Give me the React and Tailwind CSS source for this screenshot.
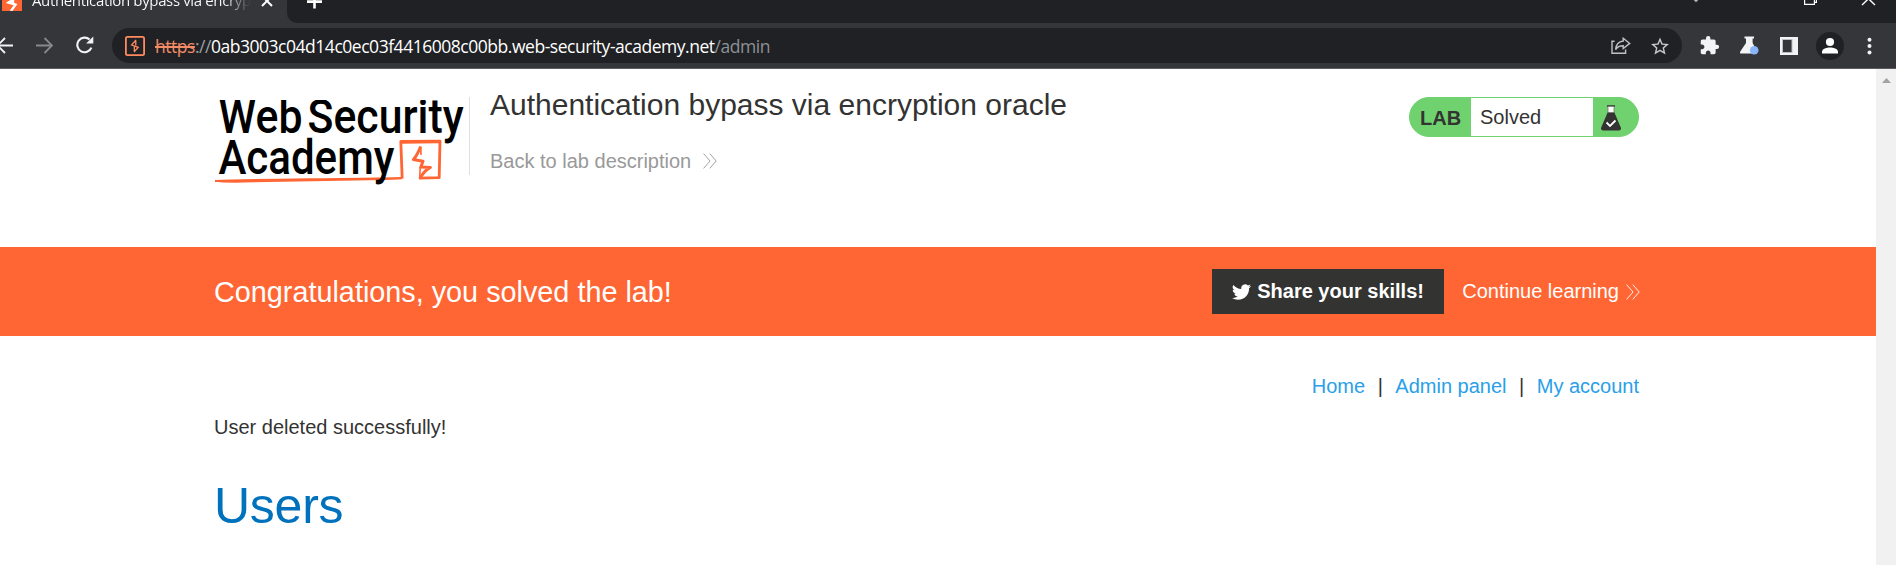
import React from "react";

function TabStrip() {
  return (
    <div className="flex h-[23px] bg-[#35363a] overflow-hidden">
      <div className="flex w-[287px] shrink-0">
        <svg className="ml-[2px] h-[11px] w-5 shrink-0" viewBox="0 0 20 11">
          <rect width="20" height="11" fill="#ff6633" />
          <path d="M10.5 0 L6.5 2.5 L13.5 4.6 L9 11 M11 0 V4" fill="none" stroke="#fff" strokeWidth="2.4" />
        </svg>
        <div className="ml-[10px] -mt-[12px] h-6 w-[219px] overflow-hidden whitespace-nowrap bg-linear-to-r from-white from-88% to-[#35363a] bg-clip-text font-['Open_Sans',sans-serif] text-[15px] leading-6 tracking-[-0.36px] text-transparent">
          Authentication bypass via encryption oracle
        </div>
        <svg className="ml-[10px] h-[7px] w-[12px]" viewBox="0 0 12 7" stroke="#fff" strokeWidth="2" fill="none">
          <path d="M1 -4 L11 6 M11 -4 L1 6" />
        </svg>
      </div>
      <div className="flex flex-1 rounded-bl-[10px] bg-[#202124]">
        <svg className="ml-[20px] h-[9px] w-[15px]" viewBox="0 0 15 9" stroke="#fff" strokeWidth="2.6" fill="none">
          <path d="M7.5 -6 V8.5 M0 1.6 H15" />
        </svg>
        <svg className="ml-auto h-[3px] w-[8px]" viewBox="0 0 8 3" stroke="#b5b6b8" strokeWidth="1.8" fill="none">
          <path d="M0 -3 L4 1 L8 -3" />
        </svg>
        <svg className="ml-[104px] h-[6px] w-[14px]" viewBox="0 0 14 6" stroke="#fff" strokeWidth="1.2" fill="none">
          <path d="M0.6 -4 V4.4 H10.4 V-4 M10.4 2.4 H12.4 V-4" />
        </svg>
        <svg className="ml-[43px] mr-[20px] h-[6px] w-[15px]" viewBox="0 0 15 6" stroke="#fff" strokeWidth="1.4" fill="none">
          <path d="M1 4.9 L13.5 -7 M14 4.9 L1.5 -7" />
        </svg>
      </div>
    </div>
  );
}

function Toolbar() {
  return (
    <div className="flex h-[46px] items-center border-b border-[#5b5c5f] bg-[#35363a]">
      <svg className="h-[20px] w-[14px] shrink-0" viewBox="0 0 14 20" fill="none" stroke="#f1f3f4" strokeWidth="1.9">
        <path d="M13 9.5 H-3 M5 2 L-2.5 9.5 L5 17" />
      </svg>
      <svg className="ml-[22px] h-[20px] w-[17px] shrink-0" viewBox="0 0 17 20" fill="none" stroke="#86878a" strokeWidth="1.9">
        <path d="M0 9.5 H15.5 M8.5 2 L16 9.5 L8.5 17" />
      </svg>
      <svg className="ml-[23px] -mt-px h-[18px] w-[18px] shrink-0" viewBox="0 0 18 18">
        <path d="M15.4 11.6 A7.3 7.3 0 1 1 13.6 3.6" fill="none" stroke="#f1f3f4" strokeWidth="2.1" />
        <path d="M17.3 0.4 V7.6 H10.1 Z" fill="#f1f3f4" />
      </svg>
      <div className="ml-[18px] flex h-[35px] w-[1570px] shrink-0 items-center rounded-full bg-[#202124]">
        <svg className="ml-[13px] h-[20px] w-[20px] shrink-0" viewBox="0 0 20 20" fill="none" stroke="#ff8a5f">
          <rect x="0.9" y="0.9" width="18.2" height="18.2" rx="1.6" strokeWidth="1.8" />
          <path d="M11 4 L6.6 9 L13.2 11.4 L9 16 M10.8 4.5 V9.4 M9.3 10.8 V15.6" strokeWidth="1.3" />
        </svg>
        <div className="ml-[10px] whitespace-nowrap font-['Open_Sans',sans-serif] text-[17.5px] leading-[30px] tracking-[-0.47px] text-white">
          <span className="text-[#f28b66] line-through decoration-[1.5px]">https</span>
          <span className="text-[#9aa0a6]">://</span>
          <span>0ab3003c04d14c0ec03f4416008c00bb.web-security-academy.net</span>
          <span className="text-[#8d9196]">/admin</span>
        </div>
        <svg className="ml-auto h-[18px] w-[20px] shrink-0" viewBox="0 0 20 18" fill="none" stroke="#bdc1c6" strokeWidth="1.4">
          <path d="M3.6 4.3 H1 V16.3 H14.6 V12.6" />
          <path d="M12.2 1.3 L18.7 6.4 L12.2 11.6 V8.8 C8.8 8.8 6.3 9.9 4.6 12.6 C5 8 7.6 4.5 12.2 4 Z" />
        </svg>
        <svg className="ml-[20px] mr-[13px] h-[18px] w-[18px] shrink-0" viewBox="2 2 20 19" fill="#c4c7cb">
          <path d="M22 9.24l-7.19-.62L12 2 9.19 8.63 2 9.24l5.46 4.73L5.82 21 12 17.27 18.18 21l-1.63-7.03L22 9.24zM12 15.4l-3.76 2.27 1-4.28-3.32-2.88 4.38-.38L12 6.1l1.71 4.04 4.38.38-3.32 2.88 1 4.28L12 15.4z" />
        </svg>
      </div>
      <svg className="ml-[17px] h-[21px] w-[21px] shrink-0" viewBox="0 0 24 24" fill="#f1f3f4">
        <path d="M20.5 11H19V7c0-1.1-.9-2-2-2h-4V3.5a2.5 2.5 0 0 0-5 0V5H4c-1.1 0-1.99.9-1.99 2v3.8H3.5c1.49 0 2.7 1.21 2.7 2.7s-1.21 2.7-2.7 2.7H2V20c0 1.1.9 2 2 2h3.8v-1.5c0-1.49 1.21-2.7 2.7-2.7s2.7 1.21 2.7 2.7V22H17c1.1 0 2-.9 2-2v-4h1.5a2.5 2.5 0 0 0 0-5z" />
      </svg>
      <svg className="ml-[20px] h-[19px] w-[20px] shrink-0" viewBox="0 0 20 19">
        <path d="M4.5 0.5 H14 V2.5 H12.6 V7 L17 15 V17.5 H1 Q-0.4 17.5 0.3 15.6 L6 7 V2.5 H4.5 Z" fill="#f1f3f4" />
        <circle cx="14.2" cy="14.2" r="4.3" fill="#8ab4f8" />
      </svg>
      <svg className="ml-[20px] h-[18px] w-[18px] shrink-0" viewBox="0 0 18 18">
        <rect width="18" height="18" fill="#f1f3f4" />
        <rect x="2.5" y="2.5" width="9.5" height="13" fill="#35363a" stroke="#bcbdbf" />
      </svg>
      <svg className="ml-[18px] h-[28px] w-[28px] shrink-0" viewBox="0 0 28 28">
        <circle cx="14" cy="14" r="14" fill="#202124" />
        <circle cx="14" cy="10" r="4.1" fill="#fff" />
        <path d="M6 21.6 V20 C6 16.7 11 15.6 14 15.6 C17 15.6 22 16.7 22 20 V21.6 Z" fill="#fff" />
      </svg>
      <svg className="ml-[23px] h-[18px] w-[5px] shrink-0" viewBox="0 0 5 18" fill="#f1f3f4">
        <circle cx="2.5" cy="2.7" r="2" />
        <circle cx="2.5" cy="9" r="2" />
        <circle cx="2.5" cy="15.4" r="2" />
      </svg>
    </div>
  );
}

function AcademyLogo() {
  return (
    <svg className="h-[90px] w-[254px] shrink-0" viewBox="0 0 254 90" fontFamily="Roboto, sans-serif" fontWeight="500">
      <g fill="none" stroke="#ff6633" strokeLinejoin="round">
        <path d="M1 81 C40 79.6 120 79.4 188 78" strokeWidth="2" />
        <path d="M1 80.6 Q10 82.4 40 81.4 L170 79.2 L188 78.4" strokeWidth="1.8" />
        <path d="M188.2 78.6 L186.8 41.4 L226 41.2 L225.2 77.6 L205 78.2" strokeWidth="2.8" />
        <path d="M188 42.6 L225 42" strokeWidth="2.4" />
        <path d="M206.6 46.6 C204.6 52 202.6 56 199.4 59.6 L209 61.2 L206.8 67 L216.4 67.4 C211.4 70 208.4 74 205.8 78.6" strokeWidth="3" />
        <path d="M206.8 46.8 L207 55 M206.2 67 L205.8 77" strokeWidth="1.6" />
      </g>
      <text x="4.6" y="32.6" fontSize="47.5" textLength="84" lengthAdjust="spacingAndGlyphs">Web</text>
      <text x="93.6" y="32.6" fontSize="47.5" textLength="156" lengthAdjust="spacingAndGlyphs">Security</text>
      <text x="4.4" y="73.6" fontSize="47.5" textLength="176" lengthAdjust="spacingAndGlyphs">Academy</text>
    </svg>
  );
}

function Chevrons({ className }) {
  return (
    <svg className={className} viewBox="0 0 14 16" fill="none" stroke="currentColor" strokeWidth="0.9">
      <path d="M0.6 0.6 L7 8 L0.6 15.4 M6.8 0.6 L13.2 8 L6.8 15.4" />
    </svg>
  );
}

function LabStatus() {
  return (
    <div className="mt-[28px] flex h-[40px] w-[230px] overflow-hidden rounded-full border border-[#70d16f] bg-[#70d16f] text-[#333332]">
      <div className="w-[61px] pl-[10px] text-[20px] font-bold leading-[40px]">LAB</div>
      <div className="w-[122px] bg-white pl-[9px] text-[20px] leading-[38px]">Solved</div>
      <svg className="ml-[8px] mt-[7px] h-[26px] w-[20px]" viewBox="0 0 20 26">
        <path d="M6 1 H14" stroke="#333332" strokeWidth="1.6" />
        <path d="M7 1.5 H13 V8 H7 Z" fill="#fff" stroke="#777" strokeWidth="0.8" />
        <path d="M6.6 7.5 H13.4 L20 23 Q20.2 25.4 18 25.4 H2 Q-0.2 25.4 0 23 Z" fill="#333332" />
        <path d="M5.5 17.5 L9 21 L14.5 15.5" fill="none" stroke="#fff" strokeWidth="1.8" />
      </svg>
    </div>
  );
}

function LabHeader() {
  return (
    <header className="flex h-[178px] pl-[214px] pr-[237px]">
      <div className="flex h-[90px] w-[255px] pt-[31px]">
        <AcademyLogo />
      </div>
      <div className="mt-[28px] h-[78px] w-0 border-l border-[#e0e0e0]" />
      <div className="ml-[20px] flex flex-col">
        <h2 className="mt-[18px] whitespace-nowrap text-[30px] leading-[36px] text-[#333332]">
          Authentication bypass via encryption oracle
        </h2>
        <a className="mt-[23px] flex items-center whitespace-nowrap text-[20px] leading-[30px] text-[#999]">
          Back to lab description
          <Chevrons className="ml-[12px] h-4 w-[14px]" />
        </a>
      </div>
      <div className="ml-auto">
        <LabStatus />
      </div>
    </header>
  );
}

function SolvedBanner() {
  return (
    <section className="flex h-[89px] items-center bg-[#ff6633] pl-[214px] pr-[235px] text-white">
      <h4 className="text-[28.8px] leading-[40px]">Congratulations, you solved the lab!</h4>
      <a className="ml-auto flex h-[45px] w-[232px] items-center bg-[#333332] pl-[20px] text-[20px] font-bold">
        <svg className="mr-[6px] h-[20px] w-[19px] shrink-0" viewBox="0 1 24 22" fill="#fff">
          <path d="M23.95 4.57a10 10 0 0 1-2.82.77 4.96 4.96 0 0 0 2.16-2.72c-.95.55-2 .95-3.13 1.18a4.92 4.92 0 0 0-8.38 4.48C7.69 8.1 4.07 6.13 1.64 3.16a4.92 4.92 0 0 0 1.52 6.57 4.9 4.9 0 0 1-2.23-.61v.06a4.92 4.92 0 0 0 3.95 4.83 5 5 0 0 1-2.21.08 4.94 4.94 0 0 0 4.6 3.42A9.87 9.87 0 0 1 0 19.54a14 14 0 0 0 7.55 2.21c9.05 0 14-7.5 14-13.98 0-.21 0-.42-.02-.63a9.94 9.94 0 0 0 2.46-2.55z" />
        </svg>
        <span className="mb-[2px] whitespace-nowrap">Share your skills!</span>
      </a>
      <a className="ml-[18px] flex items-center whitespace-nowrap text-[20px]">
        <span className="mb-[2px]">Continue learning</span>
        <Chevrons className="ml-[7px] mr-px h-4 w-[14px]" />
      </a>
    </section>
  );
}

function Content() {
  return (
    <main className="flex flex-col pl-[214px] pr-[237px] text-[20px] leading-[30px] text-[#333332]">
      <nav className="mt-[35px] flex justify-end whitespace-nowrap text-[#29a0e8]">
        <a>Home</a>
        <span className="mx-[12.5px] text-[#333332]">|</span>
        <a>Admin panel</a>
        <span className="mx-[12.5px] text-[#333332]">|</span>
        <a>My account</a>
      </nav>
      <p className="mt-[11px]">User deleted successfully!</p>
      <h1 className="mt-[34px] text-[50px] leading-[60px] tracking-[-0.25px] text-[#0071bc]">Users</h1>
    </main>
  );
}

export default function App() {
  return (
    <div className="h-[565px] w-[1896px] overflow-hidden bg-white">
      <TabStrip />
      <Toolbar />
      <div className="flex h-[496px] font-['Liberation_Sans',Arial,sans-serif]">
        <div className="w-[1876px]">
          <LabHeader />
          <SolvedBanner />
          <Content />
        </div>
        <div className="flex w-5 justify-center bg-[#f1f1f1] pt-[9px]">
          <svg className="h-[5px] w-[9px]" viewBox="0 0 9 5" fill="#a3a3a3">
            <path d="M0 5 L4.5 0 L9 5 Z" />
          </svg>
        </div>
      </div>
    </div>
  );
}
